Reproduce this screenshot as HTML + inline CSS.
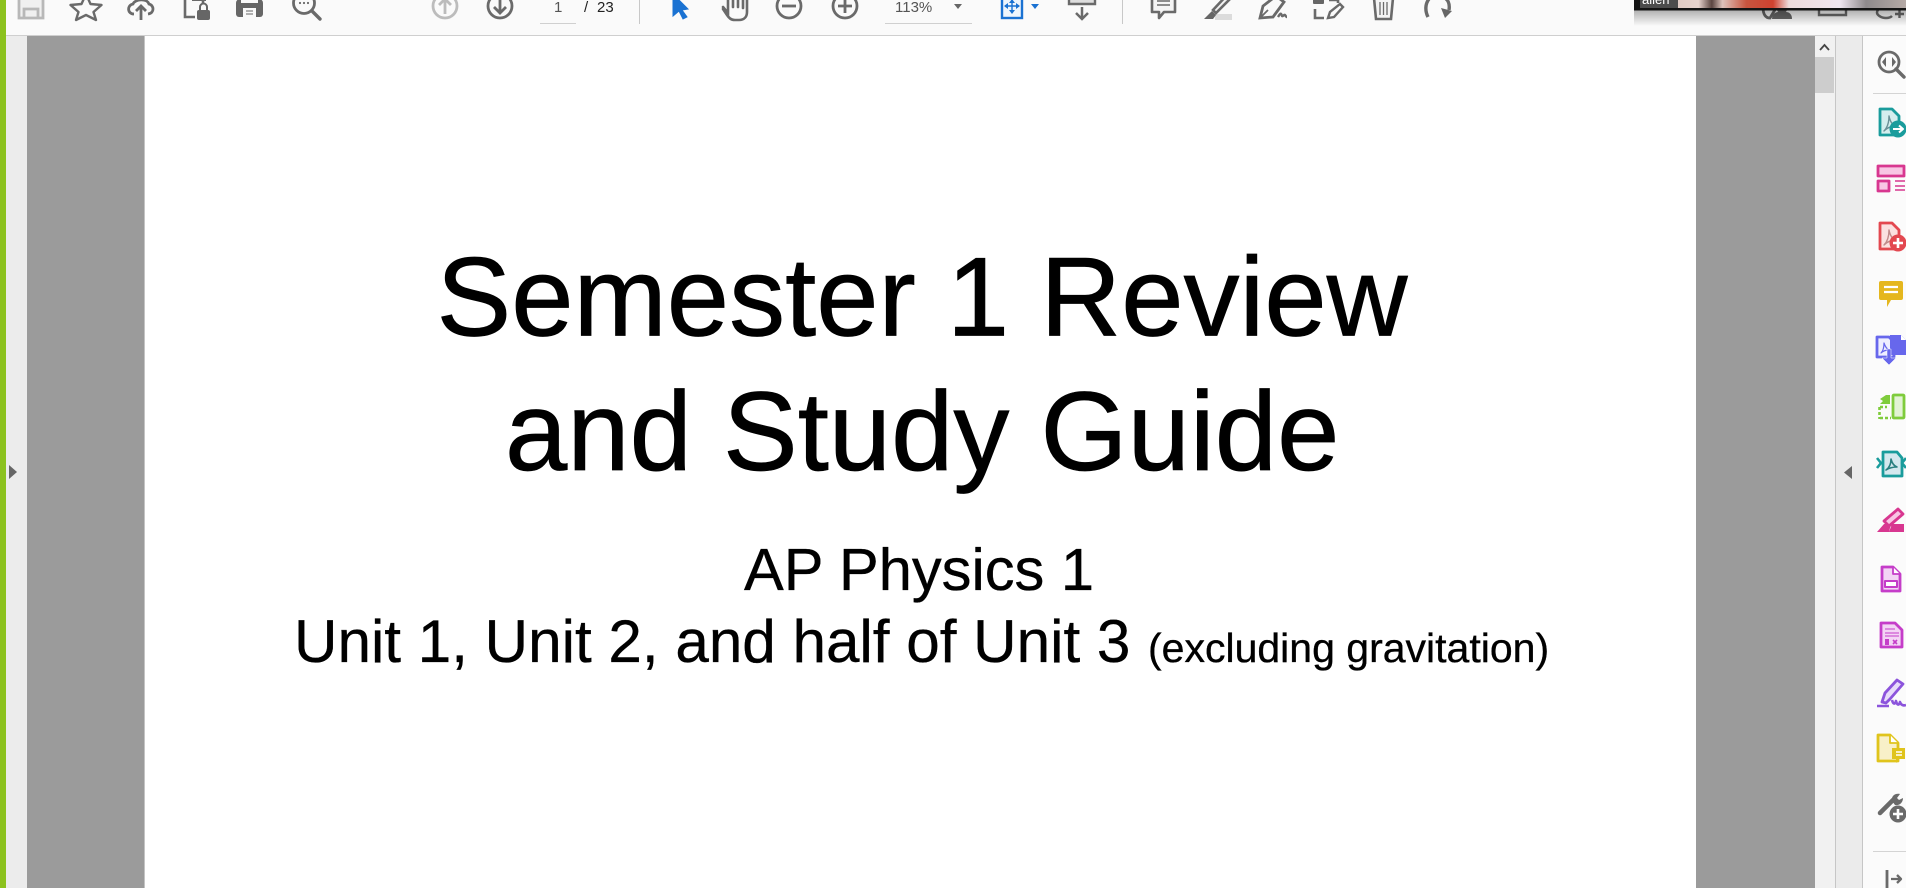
<!DOCTYPE html>
<html lang="en"><head><meta charset="utf-8"><title>Semester 1 Review</title>
<style>
html,body{margin:0;padding:0;width:1906px;height:888px;overflow:hidden;background:#fff}
svg{position:absolute;left:0;top:0;display:block}
text{font-family:"Liberation Sans",sans-serif}
.d{stroke:#000;stroke-width:.7px}
.s{stroke:#000;stroke-width:.35px}
</style></head><body>
<svg width="1906" height="888" viewBox="0 0 1906 888" xmlns="http://www.w3.org/2000/svg">
<defs><linearGradient id="sh" x1="0" y1="0" x2="0" y2="1"><stop offset="0" stop-color="#000" stop-opacity=".3"/><stop offset="1" stop-color="#000" stop-opacity="0"/></linearGradient>
<linearGradient id="ph" x1="0" y1="0" x2="1" y2="0"><stop offset="0" stop-color="#d9c0b8"/><stop offset=".22" stop-color="#e6d3cd"/><stop offset=".27" stop-color="#5a4540"/><stop offset=".31" stop-color="#dcc2bb"/><stop offset=".4" stop-color="#c8553f"/><stop offset=".5" stop-color="#d0412f"/><stop offset=".56" stop-color="#eedcdc"/><stop offset=".75" stop-color="#f0e6f0"/><stop offset=".85" stop-color="#8f8a8c"/><stop offset="1" stop-color="#b5aaa6"/></linearGradient></defs>

<!-- backgrounds -->
<rect width="1906" height="888" fill="#fff"/>
<rect width="1906" height="35" fill="#fafafa"/>
<rect y="35" width="1906" height="1" fill="#cfcfcf"/>
<rect y="36" x="6" width="21" height="852" fill="#ececec"/>
<rect y="36" x="27" width="118" height="852" fill="#9b9b9b"/>
<rect y="36" x="144" width="1" height="852" fill="#c4c4c4"/>
<rect y="36" x="1696" width="119" height="852" fill="#9b9b9b"/>
<rect y="36" x="1815" width="20" height="852" fill="#f1f1f1"/>
<rect y="36" x="1835" width="1" height="852" fill="#c6c6c6"/>
<rect y="36" x="1836" width="26" height="852" fill="#ebebeb"/>
<rect y="36" x="1862" width="1" height="852" fill="#c6c6c6"/>
<rect y="36" x="1863" width="43" height="852" fill="#fbfbfb"/>
<rect y="0" x="0" width="6" height="888" fill="#8cc21e"/>
<rect x="1815" y="57" width="19" height="36" fill="#cdcdcd"/>
<path d="M1820 50l4.500-5 4.500 5" fill="none" stroke="#444" stroke-width="1.800"/>
<path d="M9 465l8 7-8 7z" fill="#666"/>
<path d="M1852 466v13l-8-6.500z" fill="#666"/>
<rect x="1873" y="93" width="33" height="1" fill="#d4d4d4"/>
<rect x="1873" y="851" width="33" height="1" fill="#d4d4d4"/>

<!-- document text -->
<text class="d" x="436.500" y="335.500" font-size="112" fill="#000">Semester 1 Review</text>
<text class="d" x="505" y="470" font-size="112" fill="#000">and Study Guide</text>
<text class="s" x="744" y="590" font-size="59.600" fill="#000">AP Physics 1</text>
<text class="s" x="294" y="662" font-size="60.200" fill="#000">Unit 1, Unit 2, and half of Unit 3</text>
<text class="s" x="1148" y="662" font-size="41" fill="#000">(excluding gravitation)</text>

<!-- toolbar left -->
<g fill="none" stroke="#b8b8b8" stroke-width="2.800"><path d="M19-6h19l5 5v19H19z" fill="#f0f0f0"/><path d="M24 18V9h14v9"/></g>
<path d="M86-6l4.500 10 11 1-8 7 2.500 8-10-5-10 5 2.500-8-8-7 11-1z" fill="none" stroke="#6a6a6a" stroke-width="2.400" stroke-linejoin="round"/>
<g fill="none" stroke="#6a6a6a" stroke-width="2.800"><path d="M134 14c-7 0-7-9-1-10 2-5 14-6 16 0 5 1 6 9-1 10"/><path d="M141 20V7M136 11l5-5 5 5" fill="#fafafa"/></g>
<path d="M185-4v21h10M203 0v4" fill="none" stroke="#6a6a6a" stroke-width="2.600"/><path d="M193-6h12v6h-12z" fill="#fafafa" stroke="#6a6a6a" stroke-width="2"/>
<rect x="197" y="10" width="13" height="10" rx="2" fill="#666"/><path d="M200 10V7a3.500 3.500 0 0 1 7 0v3" fill="none" stroke="#666" stroke-width="2"/>
<path d="M236 3a4 4 0 0 1 4-4h19a4 4 0 0 1 4 4v11a3 3 0 0 1-3 3h-21a3 3 0 0 1-3-3z" fill="#666"/><rect x="243" y="8" width="13" height="10" fill="#fafafa"/><path d="M246 11h7M246 14h7" stroke="#666"/>
<rect x="241" y="0" width="17" height="3" fill="#fafafa"/>
<circle cx="304" cy="3" r="10.500" fill="none" stroke="#6a6a6a" stroke-width="2.800"/><path d="M312 11l8 8" stroke="#6a6a6a" stroke-width="3.400" stroke-linecap="round"/><circle cx="300" cy="3" r="1.100" fill="#6a6a6a"/><circle cx="304" cy="3" r="1.100" fill="#6a6a6a"/><circle cx="308" cy="3" r="1.100" fill="#6a6a6a"/>

<g fill="none" stroke="#bcbcbc" stroke-width="2.800"><circle cx="445" cy="6" r="12"/><path d="M445 14V0M439 5l6-6 6 6"/></g>
<g fill="none" stroke="#6a6a6a" stroke-width="2.800"><circle cx="500" cy="6" r="12"/><path d="M500-2v13M494 7l6 6 6-6"/></g>
<text x="554" y="12" font-size="15" fill="#555">1</text>
<rect x="540" y="23" width="36" height="1" fill="#d0d0d0"/>
<text x="584" y="12" font-size="15" fill="#222">/</text>
<text x="597" y="12" font-size="15" fill="#222">23</text>
<rect x="639" y="0" width="1" height="24" fill="#c8c8c8"/>

<path d="M673-6l15 15-6 1 5 7-4 2-4-8-6 5z" fill="#1a72d2" stroke="#1a72d2" stroke-width="1"/>
<path d="M723 7l5 6V0M733-3v10M738-3v10M743-2v10M747 0v12c0 5-3 8-8 8h-4c-4 0-6-2-8-5l-4-6" fill="none" stroke="#6a6a6a" stroke-width="2.600" stroke-linecap="round"/>
<g fill="none" stroke="#6a6a6a" stroke-width="2.800"><circle cx="789" cy="6" r="12"/><path d="M782 6h14"/><circle cx="845" cy="6" r="12"/><path d="M838 6h14M845-1v14"/></g>
<text x="895" y="12" font-size="15" fill="#555">113%</text>
<rect x="885" y="23" width="87" height="1" fill="#d0d0d0"/>
<path d="M954 4h8l-4 5z" fill="#666"/>

<rect x="1002" y="-6" width="20" height="24" fill="#eef5fc" stroke="#1a72d2" stroke-width="2.400"/>
<path d="M1012-1v14M1005 6h14" stroke="#1a72d2" stroke-width="1.400"/><path d="M1012-1l-3 4h6zM1012 14l-3-4h6zM1004 6l4-3v6zM1020 6l-4-3v6z" fill="#1a72d2"/>
<path d="M1031 4h8l-4 5z" fill="#1a72d2"/>
<path d="M1069-6h26V4h-26z" fill="#ddd" stroke="#6a6a6a" stroke-width="2.400"/><path d="M1082 7v12M1076 13l6 6 6-6" fill="none" stroke="#6a6a6a" stroke-width="2.500"/>
<rect x="1122" y="0" width="1" height="24" fill="#c8c8c8"/>

<path d="M1152-4h23v16h-11l-5 6v-6h-7z" fill="#f4f4f4" stroke="#6a6a6a" stroke-width="2.600" stroke-linejoin="round"/><path d="M1157 1h13M1157 5h13" stroke="#6a6a6a" stroke-width="1.500"/>
<rect x="1215" y="14" width="17" height="6" fill="#dcdcdc"/>
<path d="M1228-6l-15 16 3 3 16-16z" fill="#f2f2f2" stroke="#6a6a6a" stroke-width="2.600"/><path d="M1204 19l8-8 4 4-3 4z" fill="#666"/>
<path d="M1260 18l3-12 13-10 8 6-11 15z" fill="none" stroke="#6a6a6a" stroke-width="2.800"/><path d="M1278 17c2-3 3-5 4-1 1 1 2-2 3-1s1 2 2 2" fill="none" stroke="#6a6a6a" stroke-width="2.400"/><path d="M1261 17l7-7" stroke="#6a6a6a" stroke-width="1.800"/>
<rect x="1313" y="-5" width="11" height="9" rx="1" fill="#666"/>
<path d="M1315 9v9h9M1329 0h9v3" fill="none" stroke="#6a6a6a" stroke-width="2.600"/>
<path d="M1328 18l2-6 10-8 3 3-9 10z" fill="#fafafa" stroke="#6a6a6a" stroke-width="2.400"/>
<path d="M1374-2l2 21h15l2-21" fill="#f4f4f4" stroke="#6a6a6a" stroke-width="2.600"/><path d="M1380 2v13M1383.500 2v13M1387 2v13" stroke="#6a6a6a" stroke-width="1.300"/>
<path d="M1429-1c-4 5-4 12-1 18M1443-3c5 2 7 7 6 13" fill="none" stroke="#6a6a6a" stroke-width="3.400"/><path d="M1441 8l11 3-7 7z" fill="#666"/>

<!-- icons behind overlay -->
<path d="M1763 7c0 8 3 11 7 11l6-10" fill="none" stroke="#666" stroke-width="2.800"/><path d="M1772 19c0-5 4-7 6-7h8c3 0 6 2 6 7z" fill="#666"/><circle cx="1782" cy="9" r="5" fill="#666"/>
<path d="M1819 6v9h27V6" fill="none" stroke="#6a6a6a" stroke-width="2.400"/>
<path d="M1892 8c-1-1-3-2-6-2-5 0-9 4-9 6.500s4 5.500 9 5.500c3 0 5-1 6-2" fill="none" stroke="#6a6a6a" stroke-width="2.500"/><path d="M1895 14h9M1899.500 10v8" stroke="#6a6a6a" stroke-width="2.400"/>

<!-- video overlay -->
<rect x="1634" y="10" width="272" height="16" fill="url(#sh)"/>
<rect x="1634" y="0" width="272" height="10.500" fill="#141414"/>
<rect x="1640" y="0" width="266" height="8" fill="url(#ph)"/>
<rect x="1640" y="0" width="38" height="8" fill="#4c4c4c"/>
<text x="1642" y="4" font-size="13" fill="#fff">allen</text>

<!-- right rail icons -->
<g stroke-linejoin="round">
<circle cx="1889" cy="62" r="10" fill="none" stroke="#6a6a6a" stroke-width="2.800"/><path d="M1896 69l8 8" stroke="#6a6a6a" stroke-width="3.400" stroke-linecap="round"/><path d="M1886 57v10l-4-5zM1892 57v10l4-5z" fill="#6a6a6a"/>

<path d="M1880 109h12l7 7v19h-19z" fill="#d4eeee" stroke="#1a9c9c" stroke-width="2.800"/><path d="M1884 131c3-3 5-8 5-15 1 5 3 9 7 10-4 0-8 1-12 5z" fill="none" stroke="#6a9096" stroke-width="1.400"/>
<circle cx="1898" cy="129" r="8.500" fill="#1a9c9c"/><path d="M1893 129h9M1899 125.500l4 3.500-4 3.500" fill="none" stroke="#fff" stroke-width="2"/>

<rect x="1878" y="166" width="26" height="10" fill="#f8c6e4" stroke="#d83790" stroke-width="2.800"/><rect x="1878" y="181" width="11" height="10" fill="#f8c6e4" stroke="#d83790" stroke-width="2.800"/><path d="M1895 181h10M1895 186h10M1895 190h10" stroke="#d83790" stroke-width="1.500"/>

<path d="M1880 223h12l7 7v19h-19z" fill="#fbe0e0" stroke="#e34850" stroke-width="2.800"/><path d="M1884 245c3-3 5-8 5-15 1 5 3 9 7 10-4 0-8 1-12 5z" fill="none" stroke="#c08a8a" stroke-width="1.400"/>
<circle cx="1898" cy="243" r="8.500" fill="#e34850"/><path d="M1893 243h10M1898 238v10" stroke="#fff" stroke-width="2.600"/>

<path d="M1881 281h20a2 2 0 0 1 2 2v15a2 2 0 0 1-2 2h-10l-4 7v-7h-6a2 2 0 0 1-2-2v-15a2 2 0 0 1 2-2z" fill="#e5b71e"/><path d="M1884 287h14M1884 292h14" stroke="#fff" stroke-width="2.200"/>

<path d="M1877 337h12l5 5v15h-17z" fill="#eeeeff" stroke="#6767ec" stroke-width="2.800"/><path d="M1881 353c2-2 3-5 3-10 1 3 3 6 5 7-3 0-6 1-8 3z" fill="none" stroke="#6767ec" stroke-width="1.200"/>
<path d="M1890 335h11l5 5v15h-16z" fill="#6767ec"/><path d="M1901 335l5 5h-5z" fill="#fff"/>
<path d="M1887 349h4v9h5l-7 7-7-7h5z" fill="#6767ec" stroke="#fff" stroke-width=".5"/>

<rect x="1893" y="395" width="11" height="23" rx="1" fill="#e2f3d4" stroke="#7fcc3c" stroke-width="2.800"/>
<path d="M1880 407h7M1880 418h11M1879.500 407v12" fill="none" stroke="#7fcc3c" stroke-width="2.600" stroke-dasharray="3 2"/>
<path d="M1890 395v9h-10l3-3-3-2 6-4z" fill="#7fcc3c"/>

<path d="M1883 452h14l5 6v18h-19z" fill="#d4e8ee" stroke="#1a9c9c" stroke-width="2.800"/><path d="M1877 458l4 5-4 5M1906 458l-4 5 4 5" fill="none" stroke="#1a9c9c" stroke-width="2.600"/><path d="M1886 470c3-2 5-6 5-11 1 4 3 7 6 8-4 0-8 1-11 3z" fill="none" stroke="#2a7f80" stroke-width="1.600"/>

<path d="M1884 521l14-12 5 5-14 12z" fill="#f8c6e4" stroke="#d83790" stroke-width="2.800"/><path d="M1877 532l7-8h7l-2 8zM1892 524h12v8h-15z" fill="#d83790"/>

<path d="M1882 567h11l7 7v17h-18z" fill="#f3d4f5" stroke="#c53dc9" stroke-width="2.800"/><rect x="1885" y="581" width="12" height="6" fill="#fff" stroke="#c53dc9" stroke-width="2"/><path d="M1893 567v7h7" fill="#fff" stroke="#c53dc9" stroke-width="1.800"/>

<path d="M1881 623h14l7 7v17h-21z" fill="#f3d4f5" stroke="#c53dc9" stroke-width="2.800"/><path d="M1885 629h10M1885 633h14M1885 636h14" stroke="#c53dc9" stroke-width="1.100"/><rect x="1885" y="639" width="4" height="6" fill="#c53dc9"/><path d="M1893 640l4 4M1897 640l-4 4" stroke="#c53dc9" stroke-width="1.600"/>

<path d="M1882 702l3-9 12-13 6 4-13 15-4 4z" fill="#e8dcfa" stroke="#8c54dc" stroke-width="2.800"/><path d="M1877 706h12M1892 700c1 4 3 5 4 1 1 4 3 5 4 1 1 3 3 4 6 3" fill="none" stroke="#8c54dc" stroke-width="2.600"/>

<path d="M1878 735h12l8 8v18h-20z" fill="#f8f0c8" stroke="#e0c41c" stroke-width="2.800"/><path d="M1890 735v8h8" fill="#fff" stroke="#e0c41c" stroke-width="1.800"/>
<path d="M1892 748h13v11h-6l-3 4v-4h-4z" fill="#e0c41c"/><path d="M1896 752h6M1896 755h6" stroke="#fff" stroke-width="1.400"/>

<path d="M1880 813l13-13" stroke="#6a6a6a" stroke-width="4.500" stroke-linecap="round"/><path d="M1892 801c-1-5 3-8 8-7l-3 4 2 2 4-2c0 4-3 8-8 7z" fill="#6a6a6a"/>
<circle cx="1898" cy="814" r="8.500" fill="#6a6a6a"/><path d="M1893 814h10M1898 809v10" stroke="#fff" stroke-width="2.600"/>

<path d="M1887 870v18" stroke="#6a6a6a" stroke-width="2.800"/><path d="M1891 879h10M1897 875l4 4-4 4" fill="none" stroke="#6a6a6a" stroke-width="2.300"/>
</g>
</svg>
</body></html>
